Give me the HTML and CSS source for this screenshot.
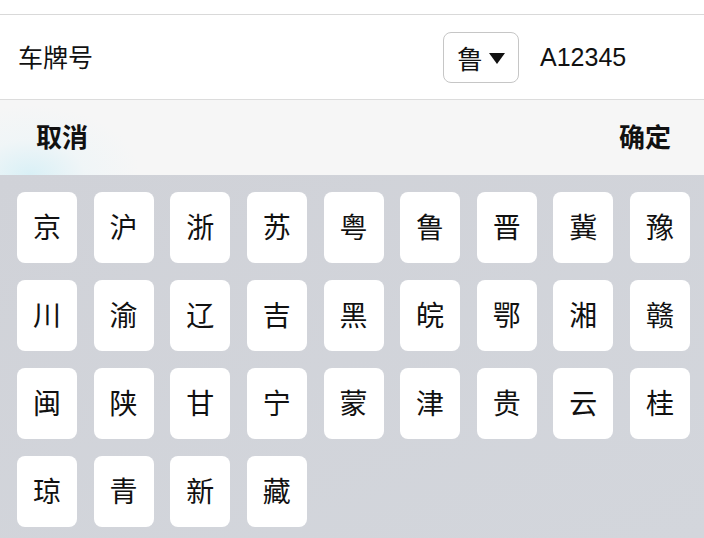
FILE: index.html
```html
<!DOCTYPE html>
<html lang="zh-CN">

<head>
  <meta name="viewport" content="width=device-width, initial-scale=1.0, user-scalable=no">
  <title>车牌号键盘</title>
  <link rel="stylesheet" href="styles.css">
</head>

<body>
  <div class="topbar"></div>
  <div class="field">
    <div class="label">车牌号</div>
    <div class="province">鲁<span class="arrow"></span></div>
    <div class="value">A12345</div>
  </div>
  <div class="toolbar">
    <span class="btn">取消</span>
    <span class="btn">确定</span>
  </div>
  <div class="keyboard">
    <div class="key">京</div>
    <div class="key">沪</div>
    <div class="key">浙</div>
    <div class="key">苏</div>
    <div class="key">粤</div>
    <div class="key">鲁</div>
    <div class="key">晋</div>
    <div class="key">冀</div>
    <div class="key">豫</div>
    <div class="key">川</div>
    <div class="key">渝</div>
    <div class="key">辽</div>
    <div class="key">吉</div>
    <div class="key">黑</div>
    <div class="key">皖</div>
    <div class="key">鄂</div>
    <div class="key">湘</div>
    <div class="key">赣</div>
    <div class="key">闽</div>
    <div class="key">陕</div>
    <div class="key">甘</div>
    <div class="key">宁</div>
    <div class="key">蒙</div>
    <div class="key">津</div>
    <div class="key">贵</div>
    <div class="key">云</div>
    <div class="key">桂</div>
    <div class="key">琼</div>
    <div class="key">青</div>
    <div class="key">新</div>
    <div class="key">藏</div>
  </div>
</body>

</html>
```

FILE: styles.css
```css
html,
body {
  margin: 0;
  height: 100%;
}

body {
  display: flex;
  flex-direction: column;
  background-color: #fff;
  color: #111;
  font-family: 'Liberation Sans', 'Noto Sans CJK SC', sans-serif;
  overflow: hidden;
}

.topbar {
  height: 14px;
  flex-shrink: 0;
  border-bottom: 1px solid #d9d9d9;
}

.field {
  height: 84px;
  flex-shrink: 0;
  display: flex;
  align-items: center;
  padding-left: 18px;
  border-bottom: 1px solid #dcdcdc;
  font-size: 25px;
}

.label {
  flex: 1;
  font-family: 'Noto Sans CJK SC', sans-serif;
  font-size: 25px;
  padding-bottom: 2px;
}

.province {
  width: 74px;
  height: 49px;
  border: 1px solid #c6c6c6;
  border-radius: 8px;
  display: flex;
  align-items: center;
  justify-content: center;
  gap: 6px;
  font-family: 'Noto Sans CJK SC', sans-serif;
  font-size: 26px;
}

.arrow {
  width: 0;
  height: 0;
  border-left: 8px solid transparent;
  border-right: 8px solid transparent;
  border-top: 11px solid #111;
  margin-top: 2px;
}

.value {
  width: 164px;
  padding-left: 21px;
}

.toolbar {
  height: 75px;
  flex-shrink: 0;
  display: flex;
  align-items: center;
  justify-content: space-between;
  padding: 0 33px 0 36px;
  background: radial-gradient(ellipse 110px 70px at 30px 75px, #d9f0f6 0%, rgba(236, 245, 248, 0.6) 50%, rgba(246, 246, 246, 0) 100%), #f6f6f6;
}

.btn {
  font-family: 'Noto Sans CJK SC', sans-serif;
  font-weight: bold;
  font-size: 26px;
  padding-bottom: 4px;
}

.keyboard {
  flex: 1;
  display: grid;
  grid-template-columns: repeat(9, 60px);
  grid-auto-rows: 71px;
  justify-content: space-between;
  align-content: start;
  row-gap: 17px;
  padding: 17px 14px 0 17px;
  background: linear-gradient(160deg, #d0d2d8 0%, #d3d6dc 100%);
}

.key {
  background-color: #fff;
  border-radius: 8px;
  display: flex;
  align-items: center;
  justify-content: center;
  padding-bottom: 4px;
  font-family: 'Noto Sans CJK SC', sans-serif;
  font-size: 28px;
  color: #111;
}
```
